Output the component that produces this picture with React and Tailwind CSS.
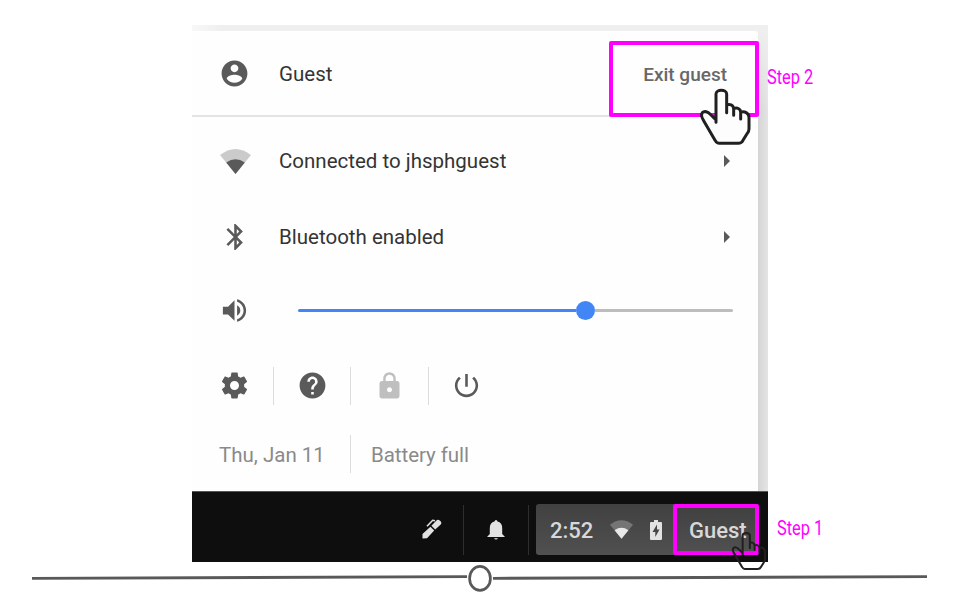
import React from "react";

const ICONS = {
  account: "M12 2C6.48 2 2 6.48 2 12s4.48 10 10 10 10-4.48 10-10S17.52 2 12 2zm0 3c1.66 0 3 1.34 3 3s-1.34 3-3 3-3-1.34-3-3 1.34-3 3-3zm0 14.2c-2.5 0-4.71-1.28-6-3.22.03-1.99 4-3.08 6-3.08 1.99 0 5.97 1.09 6 3.08-1.29 1.94-3.5 3.22-6 3.22z",
  bluetooth: "M17.71 7.71L12 2h-1v7.59L6.41 5 5 6.41 10.59 12 5 17.59 6.41 19 11 14.41V22h1l5.71-5.71-4.3-4.29 4.3-4.29zM13 5.83l1.88 1.88L13 9.59V5.83zm1.88 10.46L13 18.17v-3.76l1.88 1.88z",
  volume: "M3 9v6h4l5 5V4L7 9H3zm13.5 3c0-1.77-1.02-3.29-2.5-4.03v8.05c1.48-.73 2.5-2.25 2.5-4.02zM14 3.23v2.06c2.89.86 5 3.54 5 6.71s-2.11 5.85-5 6.71v2.06c4.01-.91 7-4.49 7-8.77s-2.99-7.86-7-8.77z",
  settings: "M19.43 12.98c.04-.32.07-.64.07-.98s-.03-.66-.07-.98l2.11-1.65c.19-.15.24-.42.12-.64l-2-3.46c-.12-.22-.39-.3-.61-.22l-2.49 1c-.52-.4-1.08-.73-1.69-.98l-.38-2.65C14.46 2.18 14.25 2 14 2h-4c-.25 0-.46.18-.49.42l-.38 2.65c-.61.25-1.17.59-1.69.98l-2.49-1c-.23-.09-.49 0-.61.22l-2 3.46c-.13.22-.07.49.12.64l2.11 1.65c-.04.32-.07.65-.07.98s.03.66.07.98l-2.11 1.65c-.19.15-.24.42-.12.64l2 3.46c.12.22.39.3.61.22l2.49-1c.52.4 1.08.73 1.69.98l.38 2.65c.03.24.24.42.49.42h4c.25 0 .46-.18.49-.42l.38-2.65c.61-.25 1.17-.59 1.69-.98l2.49 1c.23.09.49 0 .61-.22l2-3.46c.12-.22.07-.49-.12-.64l-2.11-1.65zM12 15.5c-1.93 0-3.5-1.57-3.5-3.5s1.57-3.5 3.5-3.5 3.5 1.57 3.5 3.5-1.57 3.5-3.5 3.5z",
  help: "M12 2C6.48 2 2 6.48 2 12s4.48 10 10 10 10-4.48 10-10S17.52 2 12 2zm1 17h-2v-2h2v2zm2.07-7.75l-.9.92C13.45 12.9 13 13.5 13 15h-2v-.5c0-1.1.45-2.1 1.17-2.83l1.24-1.26c.37-.36.59-.86.59-1.41 0-1.1-.9-2-2-2s-2 .9-2 2H8c0-2.21 1.79-4 4-4s4 1.79 4 4c0 .88-.36 1.68-.93 2.25z",
  lock: "M18 8h-1V6c0-2.76-2.24-5-5-5S7 3.24 7 6v2H6c-1.1 0-2 .9-2 2v10c0 1.1.9 2 2 2h12c1.1 0 2-.9 2-2V10c0-1.1-.9-2-2-2zm-6 9c-1.1 0-2-.9-2-2s.9-2 2-2 2 .9 2 2-.9 2-2 2zm3.1-9H8.9V6c0-1.71 1.39-3.1 3.1-3.1 1.71 0 3.1 1.39 3.1 3.1v2z",
  power: "M13 3h-2v10h2V3zm4.83 2.17l-1.42 1.42C17.99 7.86 19 9.81 19 12c0 3.87-3.13 7-7 7s-7-3.13-7-7c0-2.19 1.01-4.14 2.58-5.42L6.17 5.17C4.23 6.82 3 9.26 3 12c0 4.97 4.03 9 9 9s9-4.03 9-9c0-2.74-1.23-5.18-3.17-6.83z",
};

function Icon({ name, className = "size-[31px] text-[#5a5a5a]" }) {
  return (
    <svg viewBox="0 0 24 24" fill="currentColor" className={`shrink-0 ${className}`}>
      <path d={ICONS[name]} />
    </svg>
  );
}

function Wifi({ className, base, level }) {
  return (
    <svg viewBox="0 0 31 25" className={`shrink-0 ${className}`}>
      <path d="M15.5 25 L0 6 Q15.5 -6 31 6 Z" fill={base} />
      <path d="M15.5 25 L6.2 13.6 Q15.5 7 24.8 13.6 Z" fill={level} />
    </svg>
  );
}

const HAND =
  "M78 127 V42 C78 27 110 27 110 42 V98 M110 75 C118 71 131 74 131 87 V106 M131 86 C140 81 152 86 152 97 V117 M152 97 C163 92 177 99 177 112 V146 C177 152 175 156 172 160 L159 181 C156 187 151 190 145 190 H88 C82 190 79 188 76 182 L41 122 C36 114 32 104 37 98 C44 91 54 96 60 102 L78 120";
const HAND_FILL =
  "M78 120 V42 C78 27 110 27 110 42 V75 C118 71 131 74 131 87 C140 81 152 86 152 97 C163 92 177 99 177 112 V146 L159 181 L145 190 H88 L76 182 L41 122 L37 98 L60 102 Z";

function Hand({ className, fill, stroke }) {
  return (
    <svg viewBox="0 0 210 210" className={`absolute ${className}`} fill="none">
      <path d={HAND_FILL} fill={fill} />
      <path d={HAND} stroke="#202020" strokeWidth={stroke} strokeLinecap="round" strokeLinejoin="round" />
    </svg>
  );
}

function Caret() {
  return (
    <svg viewBox="0 0 6 12" className="mr-7 h-3 w-1.5 shrink-0">
      <path d="M0 0 L6 6 L0 12 Z" fill="#5a5a5a" />
    </svg>
  );
}

function Row({ icon, label, className }) {
  return (
    <div className={`flex items-center ${className}`}>
      <div className="flex w-[87px] justify-center pr-px">{icon}</div>
      <div className="grow pt-px text-[20.5px] text-[#343434]">{label}</div>
      <Caret />
    </div>
  );
}

function Separator() {
  return <div className="h-[38px] w-px shrink-0 bg-[#dcdcdc]" />;
}

export default function App() {
  return (
    <div className="relative flex h-[600px] w-[960px] flex-col overflow-hidden bg-white font-['Roboto','Liberation_Sans',sans-serif]">
      <main className="mt-[25px] ml-[192px] flex h-[537px] w-[576px] flex-col">
        <section className="flex h-[466px] flex-col bg-linear-to-r from-[#f8f8f8] via-[#efefef] via-5% to-[#efefef] pt-1.5">
          <div className="flex min-h-0 grow">
            <div className="flex w-[566px] flex-col rounded-tr-[3px] bg-[#fefefe]">
              <div className="flex h-[86px] items-center border-b-2 border-[#e4e4e4]">
                <div className="flex w-[85px] justify-center pt-px">
                  <Icon name="account" />
                </div>
                <div className="ml-0.5 grow pt-0.5 text-[20.5px] text-[#343434]">Guest</div>
                <div className="mr-[31px] pt-[5px] text-[19px] font-medium text-[#686868]">Exit guest</div>
              </div>
              <Row
                className="h-[88px]"
                label="Connected to jhsphguest"
                icon={<Wifi className="h-[25px] w-[31px]" base="#cbcbcb" level="#5a5a5a" />}
              />
              <Row className="h-[63px]" label="Bluetooth enabled" icon={<Icon name="bluetooth" className="h-[32px] w-[31px] text-[#5a5a5a]" />} />
              <div className="flex h-[84px] items-center">
                <div className="flex w-[85px] justify-center">
                  <Icon name="volume" className="size-[31px] text-[#5a5a5a]" />
                </div>
                <div className="ml-[21px] flex w-[435px] items-center">
                  <div className="h-[3px] w-[278px] rounded-l bg-[#4285f4]" />
                  <div className="size-[19px] rounded-full bg-[#4285f4]" />
                  <div className="h-[3px] grow rounded-r bg-[#bdbdbd]" />
                </div>
              </div>
              <div className="flex h-[67px] items-center">
                <div className="flex w-[81px] justify-center pl-1">
                  <Icon name="settings" />
                </div>
                <Separator />
                <div className="flex w-[76px] justify-center">
                  <Icon name="help" />
                </div>
                <Separator />
                <div className="flex w-[77px] justify-center">
                  <Icon name="lock" className="h-[30px] w-[31px] text-[#bfbfbf]" />
                </div>
                <Separator />
                <div className="flex w-[76px] justify-center pr-px">
                  <Icon name="power" />
                </div>
              </div>
              <div className="flex h-[70px] items-center text-[20.5px] text-[#8a8a8a]">
                <div className="w-[158px] pt-0.5 pl-[27px]">Thu, Jan 11</div>
                <Separator />
                <div className="pt-0.5 pl-5 tracking-[-0.05px]">Battery full</div>
              </div>
            </div>
            <div className="flex w-2.5 flex-col bg-linear-to-r from-[#d5d5d5] to-[#e4e4e4]">
              <div className="h-20 bg-linear-to-b from-[#efefef] to-[#efefef]/0" />
            </div>
          </div>
        </section>

        <footer className="flex h-[71px] items-center justify-end border-t border-[#555555] bg-[#0e0e0e] pt-[5px]">
          <div className="flex w-[63px] justify-center">
            <svg viewBox="0 0 20 20" className="mb-px size-5" fill="#e2e2e2">
              <path d="M.5 19.5 V15 L8.4 7.8 L12.2 11.6 L5 19.2 Z M9.4 6.8 L14.2 1.7 Q16 0 18 1.8 L19 2.7 Q20 4 18.5 5.7 L13.2 10.6 Z" />
              <path d="M5 7.3 L10.7 1.3 L13 1.8" fill="none" stroke="#e2e2e2" strokeWidth="1.6" />
            </svg>
          </div>
          <div className="h-[50px] w-px bg-[#2e2e2e]" />
          <div className="flex w-[64px] justify-center">
            <svg viewBox="0 0 18 20" className="h-5 w-[18px]" fill="#e2e2e2">
              <path d="M9 0 Q10.3 0 10.5 1.5 Q15.2 2.6 15.2 8 V14 L18 17 H0 L2.8 14 V8 Q2.8 2.6 7.5 1.5 Q7.7 0 9 0 Z" />
              <path d="M7 18 H11 Q10.5 19.8 9 19.8 Q7.5 19.8 7 18 Z" fill="#aaaaaa" />
            </svg>
          </div>
          <div className="h-[50px] w-px bg-[#2e2e2e]" />
          <div className="ml-[7px] flex h-[51px] w-[138px] items-center rounded-l-[3px] bg-linear-to-b from-[#414141] to-[#505050] pl-3.5">
            <div className="w-[60px] pt-px text-[22px] font-medium text-[#d8d8d8]">2:52</div>
            <Wifi className="h-[19px] w-[23px]" base="#757575" level="#e8e8e8" />
            <svg viewBox="0 0 12 20" className="ml-[17px] h-5 w-3 shrink-0">
              <path d="M4 0 H8 V2 H11 Q12 2 12 3 V19 Q12 20 11 20 H1 Q0 20 0 19 V3 Q0 2 1 2 H4 Z" fill="#e2e2e2" />
              <path d="M7 4.5 L2.5 12 H5.3 V17 L9.5 9.5 H7 Z" fill="#454545" />
            </svg>
          </div>
          <div className="mr-[9px] -ml-px flex h-[51px] w-[86px] items-center rounded-[2px] border-4 border-[#ff00ff] bg-linear-to-b from-[#414141] to-[#505050] pt-px pl-3 text-[22px] font-medium text-[#d8d8d8]">
            Guest
          </div>
        </footer>
      </main>

      <svg viewBox="0 0 960 38" className="h-[38px] w-full shrink-0" fill="none" stroke="#595959">
        <path d="M32 16.3 L467 14.7 M493 16.3 L927 14.6" strokeWidth="2.8" />
        <ellipse cx="480" cy="16.4" rx="10.4" ry="12" strokeWidth="2.7" fill="white" />
      </svg>

      <div className="absolute top-[40.5px] left-[609px] h-[76.5px] w-[150px] rounded-[2px] border-4 border-[#ff00ff]" />
      <div className="absolute top-[64.5px] left-[767px] origin-left scale-x-[.82] text-[20px] leading-6 whitespace-nowrap text-[#ff00ff]">Step 2</div>
      <div className="absolute top-[515.5px] left-[777px] origin-left scale-x-[.82] text-[20px] leading-6 whitespace-nowrap text-[#ff00ff]">Step 1</div>
      <Hand className="top-20 left-[690px] size-[70px]" fill="#fdfdfd" stroke="9" />
      <Hand className="top-[525.5px] left-[724.5px] size-[47.5px]" fill="none" stroke="9" />
    </div>
  );
}
